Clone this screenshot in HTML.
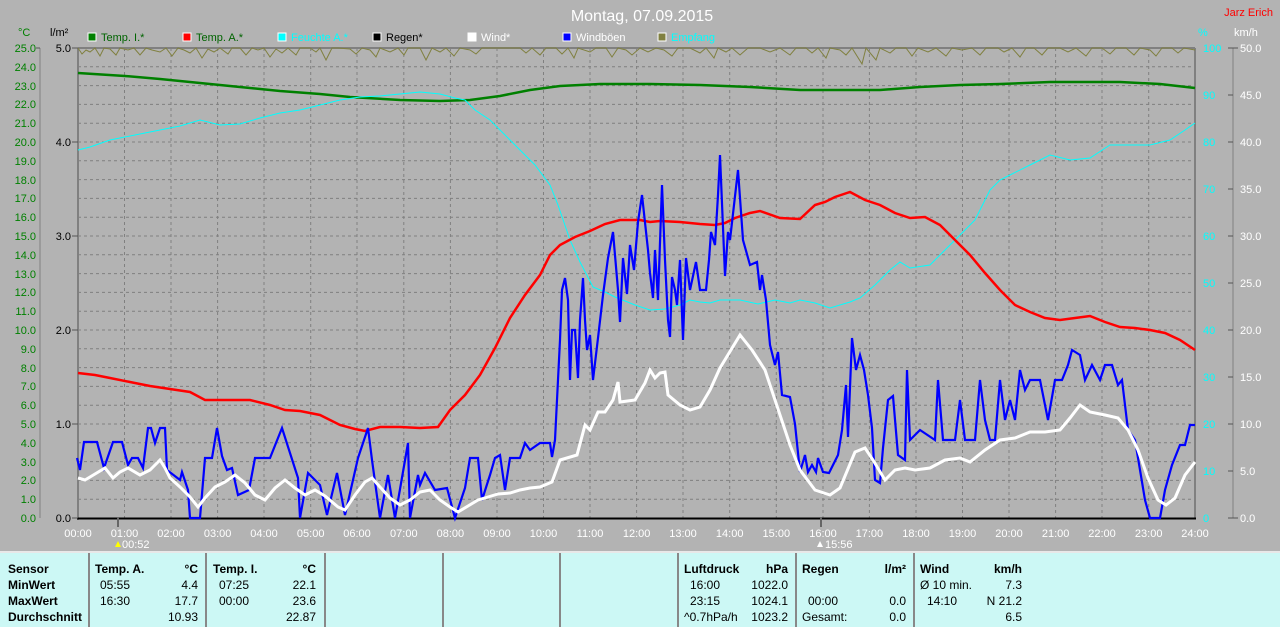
<!DOCTYPE html>
<html><head><meta charset="utf-8"><style>
body{margin:0;width:1280px;height:625px;overflow:hidden;background:#b3b3b3;font-family:"Liberation Sans",sans-serif;}
svg{position:absolute;left:0;top:0}
#tbl{position:absolute;left:0;top:551px;width:1280px;height:74px;background:#ccf8f5;border-top:2px solid #e8e8e8;font-size:12px;color:#000}
.c{position:absolute;top:0;height:74px;border-left:2px solid #888}
.t{position:absolute;white-space:nowrap}
.b{font-weight:bold}
</style></head><body>
<svg width="1280" height="551" font-family="Liberation Sans, sans-serif" font-size="11">
<text x="642" y="21" fill="#fff" font-size="16" text-anchor="middle">Montag, 07.09.2015</text>
<text x="1273" y="16" fill="#f00" font-size="11" text-anchor="end">Jarz Erich</text>
<g font-size="11">
<rect x="88" y="33" width="8" height="8" fill="#008000" stroke="#fff"/><text x="101" y="41" fill="#006400">Temp. I.*</text>
<rect x="183" y="33" width="8" height="8" fill="#f00" stroke="#fff"/><text x="196" y="41" fill="#006400">Temp. A.*</text>
<rect x="278" y="33" width="8" height="8" fill="#0ff" stroke="#fff"/><text x="291" y="41" fill="#0ff">Feuchte A.*</text>
<rect x="373" y="33" width="8" height="8" fill="#000" stroke="#fff"/><text x="386" y="41" fill="#000">Regen*</text>
<rect x="468" y="33" width="8" height="8" fill="#fff" stroke="#fff"/><text x="481" y="41" fill="#fff">Wind*</text>
<rect x="563" y="33" width="8" height="8" fill="#00f" stroke="#fff"/><text x="576" y="41" fill="#fff">Windböen</text>
<rect x="658" y="33" width="8" height="8" fill="#808040" stroke="#fff"/><text x="671" y="41" fill="#0ff">Empfang</text>
</g>
<text x="18" y="36" fill="#008000">°C</text><text x="50" y="36" fill="#000">l/m²</text>
<text x="1198" y="36" fill="#0ff">%</text><text x="1234" y="36" fill="#fff">km/h</text>
<!-- grid -->
<g stroke="#808080" stroke-dasharray="3,3" stroke-width="1">
<line x1="124.5" y1="48" x2="124.5" y2="518"/><line x1="171" y1="48" x2="171" y2="518"/><line x1="217.6" y1="48" x2="217.6" y2="518"/><line x1="264" y1="48" x2="264" y2="518"/><line x1="310.7" y1="48" x2="310.7" y2="518"/><line x1="357" y1="48" x2="357" y2="518"/><line x1="403.8" y1="48" x2="403.8" y2="518"/><line x1="450.4" y1="48" x2="450.4" y2="518"/><line x1="497" y1="48" x2="497" y2="518"/><line x1="543.5" y1="48" x2="543.5" y2="518"/><line x1="590" y1="48" x2="590" y2="518"/><line x1="636.6" y1="48" x2="636.6" y2="518"/><line x1="683" y1="48" x2="683" y2="518"/><line x1="729.7" y1="48" x2="729.7" y2="518"/><line x1="776.3" y1="48" x2="776.3" y2="518"/><line x1="823" y1="48" x2="823" y2="518"/><line x1="869.4" y1="48" x2="869.4" y2="518"/><line x1="916" y1="48" x2="916" y2="518"/><line x1="962.5" y1="48" x2="962.5" y2="518"/><line x1="1009" y1="48" x2="1009" y2="518"/><line x1="1055.6" y1="48" x2="1055.6" y2="518"/><line x1="1102" y1="48" x2="1102" y2="518"/><line x1="1148.7" y1="48" x2="1148.7" y2="518"/>
<path d="M78 66.8H1195M78 85.6H1195M78 104.4H1195M78 123.2H1195M78 142H1195M78 160.8H1195M78 179.6H1195M78 198.4H1195M78 217.2H1195M78 236H1195M78 254.8H1195M78 273.6H1195M78 292.4H1195M78 311.2H1195M78 330H1195M78 348.8H1195M78 367.6H1195M78 386.4H1195M78 405.2H1195M78 424H1195M78 442.8H1195M78 461.6H1195M78 480.4H1195M78 499.2H1195"/>
</g>
<line x1="78" y1="48" x2="1195" y2="48" stroke="#808080" stroke-width="2"/>
<line x1="78" y1="48" x2="78" y2="520" stroke="#808080" stroke-width="2"/>
<line x1="1195" y1="48" x2="1195" y2="518" stroke="#808080" stroke-width="2"/>
<line x1="77" y1="518.5" x2="1196" y2="518.5" stroke="#000" stroke-width="2"/>
<!-- left axes -->
<line x1="40" y1="48" x2="40" y2="518" stroke="#808080"/>
<line x1="1233" y1="48" x2="1233" y2="518" stroke="#808080"/>
<g fill="#008000" text-anchor="end" font-size="11">
<text x="36" y="52">25.0</text><text x="36" y="71">24.0</text><text x="36" y="90">23.0</text><text x="36" y="108">22.0</text><text x="36" y="127">21.0</text><text x="36" y="146">20.0</text><text x="36" y="165">19.0</text><text x="36" y="184">18.0</text><text x="36" y="202">17.0</text><text x="36" y="221">16.0</text><text x="36" y="240">15.0</text><text x="36" y="259">14.0</text><text x="36" y="278">13.0</text><text x="36" y="296">12.0</text><text x="36" y="315">11.0</text><text x="36" y="334">10.0</text><text x="36" y="353">9.0</text><text x="36" y="372">8.0</text><text x="36" y="390">7.0</text><text x="36" y="409">6.0</text><text x="36" y="428">5.0</text><text x="36" y="447">4.0</text><text x="36" y="466">3.0</text><text x="36" y="484">2.0</text><text x="36" y="503">1.0</text><text x="36" y="522">0.0</text>
</g>
<g fill="#000" text-anchor="end"><text x="71" y="52">5.0</text><text x="71" y="146">4.0</text><text x="71" y="240">3.0</text><text x="71" y="334">2.0</text><text x="71" y="428">1.0</text><text x="71" y="522">0.0</text></g>
<g stroke="#555"><path d="M72 48h6M72 142h6M72 236h6M72 330h6M72 424h6M72 518h6M36 48h4M1228 48h10M1228 95h5M1228 142h5M1228 189h5M1228 236h5M1228 283h5M1228 330h5M1228 377h5M1228 424h5M1228 471h5M1228 518h10"/></g>
<g fill="#0ff" font-size="11"><text x="1203" y="52">100</text><text x="1203" y="99">90</text><text x="1203" y="146">80</text><text x="1203" y="193">70</text><text x="1203" y="240">60</text><text x="1203" y="287">50</text><text x="1203" y="334">40</text><text x="1203" y="381">30</text><text x="1203" y="428">20</text><text x="1203" y="475">10</text><text x="1203" y="522">0</text></g>
<g fill="#fff" font-size="11"><text x="1240" y="52">50.0</text><text x="1240" y="99">45.0</text><text x="1240" y="146">40.0</text><text x="1240" y="193">35.0</text><text x="1240" y="240">30.0</text><text x="1240" y="287">25.0</text><text x="1240" y="334">20.0</text><text x="1240" y="381">15.0</text><text x="1240" y="428">10.0</text><text x="1240" y="475">5.0</text><text x="1240" y="522">0.0</text></g>
<!-- x labels -->
<g fill="#fff" font-size="11" text-anchor="middle">
<text x="78" y="537">00:00</text><text x="124.5" y="537">01:00</text><text x="171" y="537">02:00</text><text x="217.6" y="537">03:00</text><text x="264" y="537">04:00</text><text x="310.7" y="537">05:00</text><text x="357" y="537">06:00</text><text x="403.8" y="537">07:00</text><text x="450.4" y="537">08:00</text><text x="497" y="537">09:00</text><text x="543.5" y="537">10:00</text><text x="590" y="537">11:00</text><text x="636.6" y="537">12:00</text><text x="683" y="537">13:00</text><text x="729.7" y="537">14:00</text><text x="776.3" y="537">15:00</text><text x="823" y="537">16:00</text><text x="869.4" y="537">17:00</text><text x="916" y="537">18:00</text><text x="962.5" y="537">19:00</text><text x="1009" y="537">20:00</text><text x="1055.6" y="537">21:00</text><text x="1102" y="537">22:00</text><text x="1148.7" y="537">23:00</text><text x="1195" y="537">24:00</text>
</g>
<line x1="118" y1="517" x2="118" y2="527" stroke="#666" stroke-width="2"/>
<line x1="821" y1="517" x2="821" y2="527" stroke="#666" stroke-width="2"/>
<text x="122" y="548" fill="#fff" font-size="11">00:52</text><path d="M118 541l3 6h-6z" fill="#ff0"/>
<text x="825" y="548" fill="#fff" font-size="11">15:56</text><path d="M820 541l3 6h-6z" fill="#fff"/>
<!-- empfang -->
<polyline fill="none" stroke="#808040" stroke-width="1" points="78,48 82,54 86,50 90,52 95,48 100,56 104,48 110,49 116,55 120,48 128,50 134,48 140,55 146,48 152,50 160,52 166,48 172,56 178,48 184,50 190,53 196,48 202,58 208,49 214,52 220,48 228,54 232,48 240,48 246,55 252,48 258,50 264,48 270,57 276,49 282,53 288,48 296,55 300,48 310,48 316,52 320,48 326,60 332,48 338,48 350,49 356,54 362,48 370,50 376,57 380,48 390,52 398,48 404,55 408,48 420,48 426,60 432,48 440,52 446,48 454,56 460,48 470,50 476,54 482,48 500,48 520,48 526,53 532,48 540,55 546,48 556,48 562,54 568,48 574,58 578,48 590,52 596,48 606,48 612,57 618,48 626,50 632,55 640,48 648,52 656,48 664,50 672,56 678,48 690,48 700,53 706,48 714,58 718,48 726,52 732,48 740,55 748,48 760,48 770,52 780,48 790,55 796,48 806,48 812,53 818,48 826,58 830,48 840,50 846,55 852,48 862,64 866,48 876,60 880,48 890,53 896,48 906,48 912,56 918,48 928,52 936,48 946,56 952,48 962,50 972,48 980,55 986,48 998,48 1004,52 1012,48 1020,57 1026,48 1034,48 1042,55 1048,48 1060,48 1068,52 1076,48 1086,56 1092,48 1102,48 1110,54 1116,48 1126,48 1134,55 1140,48 1150,50 1156,56 1162,48 1172,48 1178,53 1184,48 1195,50"/>
<!-- temp I -->
<polyline fill="none" stroke="#008000" stroke-width="2.5" points="78,73 125,76 160,79 200,83 240,87 280,91 320,94 350,97 400,100 440,101 470,100 500,96 530,90 560,86 600,84 650,84 700,85 750,87 800,90 850,90 880,90 920,87 960,85 1000,84 1050,82 1120,82 1160,84 1195,88"/>
<!-- humidity -->
<polyline fill="none" stroke="#0ff" stroke-width="1" points="78,150 90,147 110,140 130,136 160,130 180,126 200,120 220,125 240,124 260,118 280,113 300,110 320,105 340,100 360,97 380,96 400,94 420,92 440,94 455,98 465,100 475,110 490,120 505,135 520,150 535,165 550,185 558,205 570,240 580,262 593,287 605,292 615,297 635,305 650,310 665,309 680,305 690,300 700,302 710,303 720,300 740,300 758,304 775,300 790,303 800,300 815,303 830,308 850,302 860,298 875,285 890,270 900,262 910,268 930,265 945,250 960,235 975,220 990,190 1000,180 1010,175 1030,165 1050,155 1070,160 1090,158 1110,145 1130,145 1150,145 1170,140 1185,130 1195,123"/>
<!-- temp A -->
<polyline fill="none" stroke="#f00" stroke-width="2.5" points="78,373 95,375 110,378 130,382 150,386 170,389 190,392 205,400 230,400 250,400 270,405 285,410 300,411 320,415 340,425 355,429 365,431 380,427 400,427 420,428 438,427 450,410 465,395 480,375 495,348 510,318 525,295 540,275 550,255 560,245 575,237 590,231 605,224 620,220 640,220 650,222 660,221 680,222 700,224 715,225 725,223 735,218 750,213 760,211 780,218 800,219 815,205 825,202 835,197 850,192 865,200 880,205 895,213 910,218 925,217 940,225 955,240 970,255 985,273 1000,290 1015,305 1030,312 1045,318 1060,320 1075,318 1090,316 1105,322 1120,327 1135,328 1150,330 1165,333 1180,340 1195,350"/>
<!-- windboeen -->
<polyline fill="none" stroke="#00f" stroke-width="2.2" points="77,458 80,470 84,442 97,442 104,468 113,442 122,442 128,465 132,458 138,458 143,468 148,428 151,428 155,443 160,428 165,428 167,470 180,480 182,472 188,490 190,518 200,518 205,458 212,458 217,428 222,456 227,470 232,468 238,495 249,490 255,458 270,458 282,428 298,478 300,518 308,473 320,485 327,515 337,473 345,515 358,458 368,428 372,460 380,518 388,475 395,518 408,443 410,518 418,475 420,485 425,473 435,490 447,488 455,518 465,488 470,458 478,458 482,500 490,475 495,458 500,455 505,490 510,458 520,458 525,443 530,450 540,443 550,443 552,457 555,440 560,340 562,290 565,278 568,300 570,380 572,330 575,330 578,378 580,320 583,278 585,320 587,350 590,335 593,380 598,338 603,295 608,258 613,232 618,290 620,322 623,258 627,294 630,245 634,270 638,222 642,195 648,250 650,273 653,298 655,250 658,300 662,185 665,260 668,320 670,337 672,277 675,290 677,305 680,260 683,340 686,258 690,290 696,262 700,290 706,290 709,260 711,232 715,245 718,195 720,155 725,276 728,232 730,240 738,170 743,240 750,265 757,262 760,290 762,275 766,300 770,345 775,365 778,352 782,395 790,397 795,424 800,472 805,455 808,472 812,465 816,472 818,458 823,472 829,473 838,455 842,430 846,385 848,437 852,338 856,370 860,355 864,370 868,395 872,428 875,480 880,483 883,448 888,400 893,396 898,455 905,460 907,370 910,440 920,430 935,440 938,380 943,440 955,440 960,400 965,440 975,440 980,380 985,420 990,440 995,440 1000,380 1005,420 1010,400 1015,420 1020,370 1025,390 1030,380 1040,380 1048,420 1055,380 1062,380 1068,365 1072,350 1080,355 1085,380 1092,365 1100,380 1105,365 1112,365 1118,385 1122,380 1128,430 1135,440 1145,500 1150,518 1160,518 1165,490 1172,465 1180,445 1185,445 1190,425 1195,425"/>
<!-- wind -->
<polyline fill="none" stroke="#fff" stroke-width="3" points="78,478 85,480 95,474 105,468 113,478 120,472 128,468 140,475 150,470 160,460 165,468 170,478 180,487 190,497 198,507 205,498 215,487 225,482 235,475 245,483 255,495 265,500 275,488 285,480 295,488 305,495 315,490 325,496 338,507 345,510 355,495 365,482 372,478 380,487 390,498 400,505 410,500 420,492 430,490 440,500 450,507 458,512 468,506 478,500 488,497 498,494 510,493 520,490 530,488 540,487 552,482 560,460 577,455 585,425 590,430 598,412 605,412 613,400 618,382 620,402 635,400 645,383 650,370 655,378 660,373 665,372 668,395 680,405 690,410 700,407 710,390 720,368 740,335 752,350 765,370 775,400 790,445 800,470 815,490 830,495 840,488 855,452 865,448 873,460 885,480 895,470 905,468 915,470 930,468 945,460 960,458 970,462 985,450 1000,440 1015,438 1030,432 1045,432 1060,430 1070,418 1080,405 1090,412 1105,415 1118,418 1128,430 1138,450 1148,478 1158,500 1166,505 1175,498 1185,475 1195,462"/>
</svg>
<div id="tbl">
<div class="c" style="left:88px"></div><div class="c" style="left:205px"></div><div class="c" style="left:324px"></div><div class="c" style="left:442px"></div><div class="c" style="left:559px"></div><div class="c" style="left:677px"></div><div class="c" style="left:795px"></div><div class="c" style="left:913px"></div>
<div class="t b" style="left:8px;top:9px">Sensor</div><div class="t b" style="left:8px;top:25px">MinWert</div><div class="t b" style="left:8px;top:41px">MaxWert</div><div class="t b" style="left:8px;top:57px">Durchschnitt</div>
<div class="t b" style="left:95px;top:9px">Temp. A.</div><div class="t b" style="right:1082px;top:9px">°C</div>
<div class="t" style="left:100px;top:25px">05:55</div><div class="t" style="right:1082px;top:25px">4.4</div>
<div class="t" style="left:100px;top:41px">16:30</div><div class="t" style="right:1082px;top:41px">17.7</div>
<div class="t" style="right:1082px;top:57px">10.93</div>
<div class="t b" style="left:213px;top:9px">Temp. I.</div><div class="t b" style="right:964px;top:9px">°C</div>
<div class="t" style="left:219px;top:25px">07:25</div><div class="t" style="right:964px;top:25px">22.1</div>
<div class="t" style="left:219px;top:41px">00:00</div><div class="t" style="right:964px;top:41px">23.6</div>
<div class="t" style="right:964px;top:57px">22.87</div>
<div class="t b" style="left:684px;top:9px">Luftdruck</div><div class="t b" style="right:492px;top:9px">hPa</div>
<div class="t" style="left:690px;top:25px">16:00</div><div class="t" style="right:492px;top:25px">1022.0</div>
<div class="t" style="left:690px;top:41px">23:15</div><div class="t" style="right:492px;top:41px">1024.1</div>
<div class="t" style="left:684px;top:57px">^0.7hPa/h</div><div class="t" style="right:492px;top:57px">1023.2</div>
<div class="t b" style="left:802px;top:9px">Regen</div><div class="t b" style="right:374px;top:9px">l/m²</div>
<div class="t" style="left:808px;top:41px">00:00</div><div class="t" style="right:374px;top:41px">0.0</div>
<div class="t" style="left:802px;top:57px">Gesamt:</div><div class="t" style="right:374px;top:57px">0.0</div>
<div class="t b" style="left:920px;top:9px">Wind</div><div class="t b" style="right:258px;top:9px">km/h</div>
<div class="t" style="left:920px;top:25px">Ø 10 min.</div><div class="t" style="right:258px;top:25px">7.3</div>
<div class="t" style="left:927px;top:41px">14:10</div><div class="t" style="right:258px;top:41px">N 21.2</div>
<div class="t" style="right:258px;top:57px">6.5</div>
</div>
</body></html>
